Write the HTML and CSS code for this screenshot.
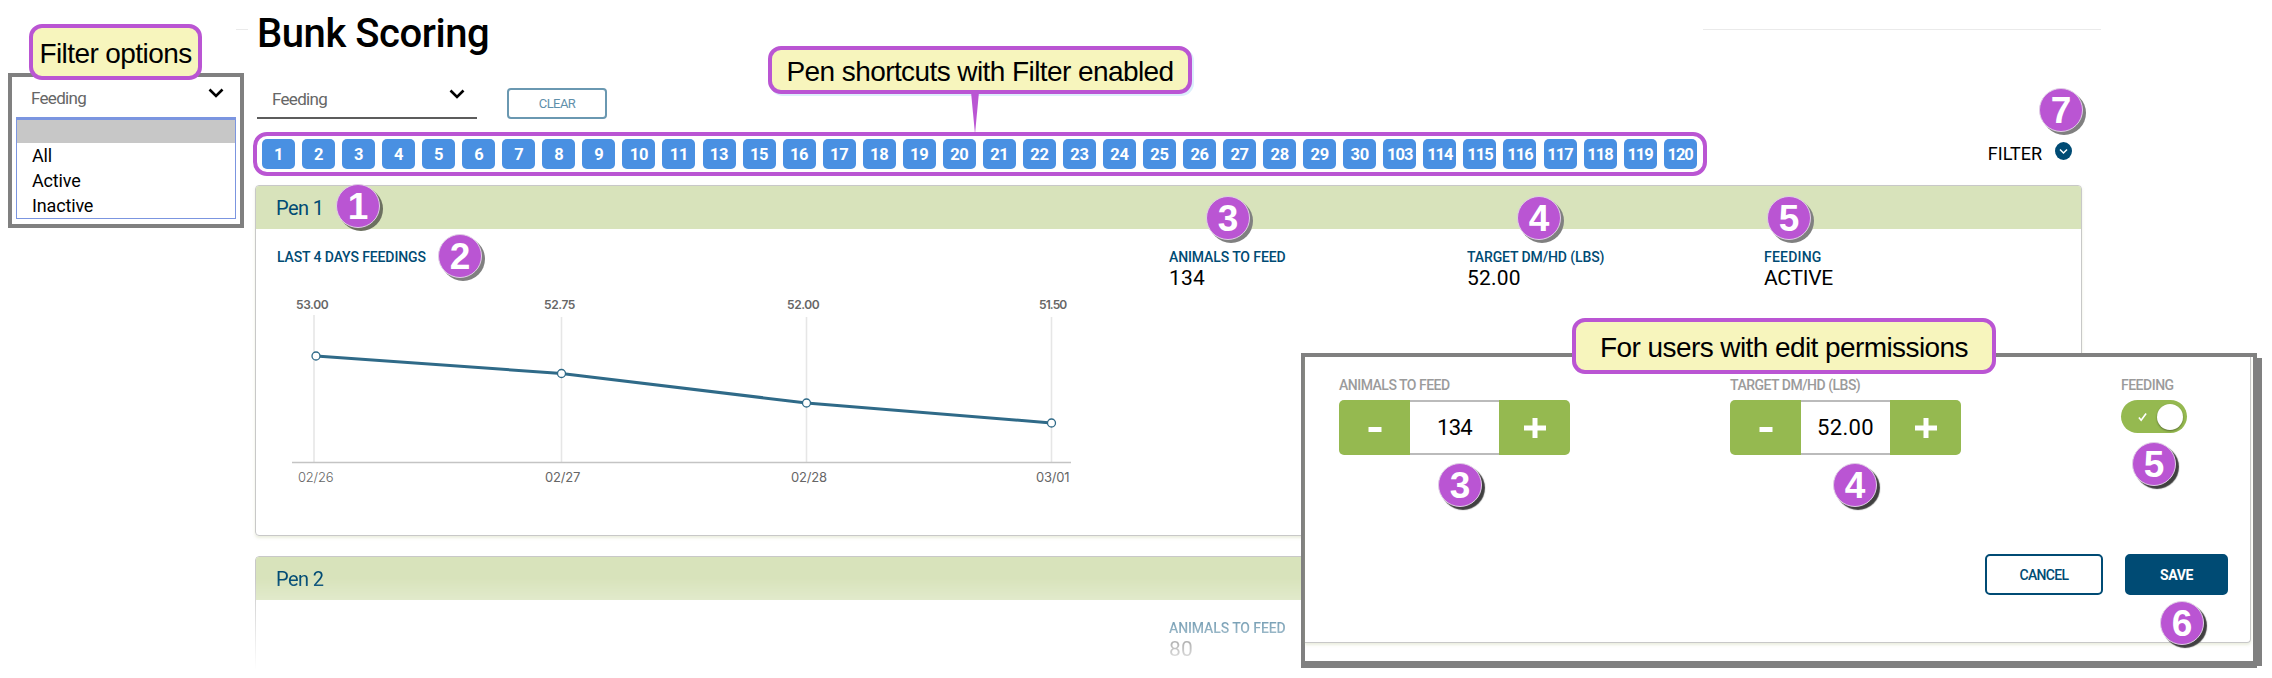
FILE: index.html
```html
<!DOCTYPE html>
<html lang="en">
<head>
    <meta charset="UTF-8">
    <meta name="viewport" content="width=device-width, initial-scale=1.0">
    <title>Bunk Scoring</title>
    <link rel="stylesheet" href="styles.css">
</head>
<body>
    <div class="page">
        <!-- Filter options, opened -->
        <aside class="options-panel">
            <div class="select-head">
                <span>Feeding</span>
                <svg class="chevron" viewBox="0 0 16 10"><path d="M1.5 1.5 8 8l6.500-6.500"/></svg>
            </div>
            <ul class="option-list">
                <li class="option blank"></li>
                <li class="option">All</li>
                <li class="option">Active</li>
                <li class="option">Inactive</li>
            </ul>
        </aside>

        <main class="main">
            <h1>Bunk Scoring</h1>

            <div class="filters">
                <div class="select">
                    <span>Feeding</span>
                    <svg class="chevron" viewBox="0 0 16 10"><path d="M1.5 1.5 8 8l6.500-6.500"/></svg>
                </div>
                <button class="btn-clear">CLEAR</button>
            </div>

            <div class="shortcuts">
                <div class="pens">
                    <span class="pen">1</span>
                    <span class="pen">2</span>
                    <span class="pen">3</span>
                    <span class="pen">4</span>
                    <span class="pen">5</span>
                    <span class="pen">6</span>
                    <span class="pen">7</span>
                    <span class="pen">8</span>
                    <span class="pen">9</span>
                    <span class="pen">10</span>
                    <span class="pen">11</span>
                    <span class="pen">13</span>
                    <span class="pen">15</span>
                    <span class="pen">16</span>
                    <span class="pen">17</span>
                    <span class="pen">18</span>
                    <span class="pen">19</span>
                    <span class="pen">20</span>
                    <span class="pen">21</span>
                    <span class="pen">22</span>
                    <span class="pen">23</span>
                    <span class="pen">24</span>
                    <span class="pen">25</span>
                    <span class="pen">26</span>
                    <span class="pen">27</span>
                    <span class="pen">28</span>
                    <span class="pen">29</span>
                    <span class="pen">30</span>
                    <span class="pen long">103</span>
                    <span class="pen long">114</span>
                    <span class="pen long">115</span>
                    <span class="pen long">116</span>
                    <span class="pen long">117</span>
                    <span class="pen long">118</span>
                    <span class="pen long">119</span>
                    <span class="pen long">120</span>
                </div>
                <div class="filter-toggle">
                    <span>FILTER</span>
                    <svg class="filter-icon" viewBox="0 0 17 18">
                        <ellipse cx="8.5" cy="9" rx="8.500" ry="9"/>
                        <path d="M5 7.500 8.500 11 12 7.500"/>
                    </svg>
                </div>
            </div>

            <section class="card">
                <h2>Pen 1</h2>
                <div class="card-body">
                    <div>
                        <div class="label">LAST 4 DAYS FEEDINGS</div>
                        <svg class="chart" width="820" height="230" viewBox="0 0 820 230">
                            <g class="grid">
                                <path d="M37 48v147M284.500 50v145M529.500 50v145M774.500 50v145"/>
                            </g>
                            <path class="axis" d="M15 195.500h779"/>
                            <polyline class="line" points="39,89 284.500,106.500 529.500,136 774.500,156"/>
                            <g class="dots">
                                <circle cx="39" cy="89" r="4"/>
                                <circle cx="284.500" cy="106.500" r="4"/>
                                <circle cx="529.500" cy="136" r="4"/>
                                <circle cx="774.500" cy="156" r="4"/>
                            </g>
                            <g class="values">
                                <text x="19" y="42">53.00</text>
                                <text x="267" y="42">52.75</text>
                                <text x="510" y="42">52.00</text>
                                <text class="tight" x="762" y="42">51.50</text>
                            </g>
                            <g class="dates">
                                <text class="thin" x="21" y="215">02/26</text>
                                <text x="268" y="215">02/27</text>
                                <text x="514" y="215">02/28</text>
                                <text x="759" y="215">03/01</text>
                            </g>
                        </svg>
                    </div>
                    <div>
                        <div class="label">ANIMALS TO FEED</div>
                        <div class="value">134</div>
                    </div>
                    <div>
                        <div class="label">TARGET DM/HD (LBS)</div>
                        <div class="value">52.00</div>
                    </div>
                    <div>
                        <div class="label wide">FEEDING</div>
                        <div class="value caps">ACTIVE</div>
                    </div>
                </div>
            </section>

            <section class="card fading">
                <h2>Pen 2</h2>
                <div class="card-body">
                    <div></div>
                    <div>
                        <div class="label">ANIMALS TO FEED</div>
                        <div class="value">80</div>
                    </div>
                </div>
            </section>
        </main>

        <!-- Rules left and right of the title -->
        <div class="rule rule-left"></div>
        <div class="rule rule-right"></div>

        <!-- Edit view -->
        <div class="edit-panel">
            <div class="edit-card">
                <div class="edit-fields">
                    <div>
                        <div class="edit-label">ANIMALS TO FEED</div>
                        <div class="stepper">
                            <button class="step"><svg viewBox="0 0 22 22"><path d="M4.500 12.500h13"/></svg></button>
                            <span class="step-value tight">134</span>
                            <button class="step"><svg viewBox="0 0 22 22"><path d="M0 11h22M11 1v20"/></svg></button>
                        </div>
                    </div>
                    <div>
                        <div class="edit-label">TARGET DM/HD (LBS)</div>
                        <div class="stepper">
                            <button class="step"><svg viewBox="0 0 22 22"><path d="M4.500 12.500h13"/></svg></button>
                            <span class="step-value">52.00</span>
                            <button class="step"><svg viewBox="0 0 22 22"><path d="M0 11h22M11 1v20"/></svg></button>
                        </div>
                    </div>
                    <div>
                        <div class="edit-label">FEEDING</div>
                        <div class="toggle">
                            <svg viewBox="0 0 10 10"><path d="M1 5.500 3.500 8.500 9 1"/></svg>
                            <span class="knob"></span>
                        </div>
                    </div>
                </div>
                <div class="actions">
                    <button class="btn-cancel">CANCEL</button>
                    <button class="btn-save">SAVE</button>
                </div>
            </div>
        </div>

        <!-- Callouts -->
        <div class="callout callout-filter">Filter options</div>
        <div class="callout callout-pens">Pen shortcuts with Filter enabled
            <svg class="pointer" viewBox="0 0 9 42" preserveAspectRatio="none"><path d="M0 0h9L4.500 42z"/></svg>
        </div>
        <div class="callout callout-edit">For users with edit permissions</div>

        <!-- Numbered markers -->
        <span class="badge b1">1</span>
        <span class="badge b2">2</span>
        <span class="badge b3">3</span>
        <span class="badge b4">4</span>
        <span class="badge b5">5</span>
        <span class="badge b7">7</span>
        <span class="badge dark e3">3</span>
        <span class="badge dark e4">4</span>
        <span class="badge dark e5">5</span>
        <span class="badge dark e6">6</span>
    </div>
</body>
</html>
```
FILE: styles.css
```css
* {
    box-sizing: border-box;
    margin: 0;
    padding: 0;
}

body {
    background: #fff;
    font-family: Roboto, Arial, sans-serif;
    color: #000;
}

button {
    font-family: inherit;
    border: none;
}

.page {
    position: relative;
    display: flex;
    width: 2272px;
    height: 678px;
    overflow: hidden;
    padding-left: 8px;
}

/* Opened filter dropdown */
.options-panel {
    width: 236px;
    height: 155px;
    margin: 73px 11px 0 0;
    padding: 0 4px;
    border: 4px solid #808080;
    flex: none;
}

.select-head,
.select {
    display: flex;
    justify-content: space-between;
    align-items: center;
    height: 40px;
    padding: 1px 12px 0 15px;
    font-size: 17px;
    letter-spacing: -0.7px;
    color: #666;
}

.chevron {
    width: 16px;
    height: 10px;
    margin-bottom: 10px;
    fill: none;
    stroke: #000;
    stroke-width: 2.6;
}

.option-list {
    list-style: none;
    height: 102px;
    border: 1px solid #7b95e0;
    border-top-width: 3px;
}

.option {
    height: 25px;
    padding-left: 15px;
    font-size: 18px;
    line-height: 26px;
    letter-spacing: -0.15px;
}

.option.blank {
    height: 23px;
    background: #c7c7c7;
}

/* Main column */
.main {
    width: 1827px;
    padding-top: 10px;
    flex: none;
}

h1 {
    height: 47px;
    padding-left: 2px;
    font-size: 40px;
    font-weight: 500;
    line-height: 47px;
    letter-spacing: -0.45px;
}

.filters {
    display: flex;
    align-items: flex-end;
    gap: 30px;
    margin-top: 22px;
    padding-left: 2px;
}

.select {
    width: 220px;
    border-bottom: 2px solid #5c5c5c;
}

.btn-clear {
    width: 100px;
    height: 31px;
    border: 2px solid #6a98b1;
    border-radius: 4px;
    background: #fff;
    color: #5f90ab;
    font-size: 13px;
    letter-spacing: -0.6px;
}

.shortcuts {
    display: flex;
    justify-content: space-between;
    align-items: center;
    margin: 13px 0 9px -2px;
}

.pens {
    display: flex;
    justify-content: space-between;
    align-items: center;
    width: 1454px;
    height: 44px;
    padding: 0 6px 0 5px;
    border: 4px solid #ba55d3;
    border-radius: 14px;
}

.pen {
    width: 33px;
    height: 30px;
    border-radius: 5px;
    background: #4990e2;
    color: #fff;
    font-size: 16.5px;
    font-weight: 700;
    line-height: 31px;
    text-align: center;
    letter-spacing: -0.3px;
}

.pen.long {
    letter-spacing: -1px;
}

.filter-toggle {
    display: flex;
    align-items: center;
    gap: 13px;
    margin: 0 10px 2px 0;
    font-size: 18px;
}

.filter-icon {
    width: 17px;
    height: 18px;
    margin-bottom: 5px;
    fill: #004b74;
}

.filter-icon path {
    fill: none;
    stroke: #fff;
    stroke-width: 1.5;
}

/* Pen cards */
.card {
    height: 351px;
    margin-bottom: 20px;
    border: 1px solid #c8c8c8;
    border-radius: 4px;
    box-shadow: 0 2px 3px rgba(190, 200, 150, 0.3);
    overflow: hidden;
}

.card h2 {
    height: 43px;
    padding: 1px 0 0 20px;
    background: #d8e3bb;
    color: #004b74;
    font-size: 20px;
    font-weight: 400;
    line-height: 43px;
    letter-spacing: -0.6px;
}

.card-body {
    display: grid;
    grid-template-columns: 892px 298px 297px 1fr;
    padding: 18px 0 0 21px;
}

.label {
    height: 20px;
    color: #004b74;
    font-size: 14px;
    font-weight: 500;
    line-height: 20px;
    letter-spacing: -0.11px;
}

.label.wide {
    letter-spacing: 0.2px;
}

.value {
    font-size: 21px;
    line-height: 22px;
    letter-spacing: 0.2px;
}

.value.caps {
    letter-spacing: -0.25px;
}

.fading {
    mask-image: linear-gradient(#000 22px, transparent 114px);
}

/* Feedings chart */
.chart {
    display: block;
    font-family: Inter, sans-serif;
}

.grid path {
    stroke: #e6e6e6;
    stroke-width: 1.6;
}

.axis {
    stroke: #c4c4c4;
    stroke-width: 1.5;
}

.line {
    fill: none;
    stroke: #2f6a88;
    stroke-width: 3;
}

.dots circle {
    fill: #fff;
    stroke: #2f6a88;
    stroke-width: 1.3;
}

.values text {
    fill: #666;
    font-size: 12px;
    font-weight: 600;
    letter-spacing: -0.4px;
}

.values .tight {
    letter-spacing: -0.9px;
}

.dates text {
    fill: #666;
    font-size: 13px;
    letter-spacing: -0.2px;
}

.dates .thin {
    font-weight: 300;
}

.rule {
    position: absolute;
    top: 29px;
    height: 1px;
    background: #eaeaea;
}

.rule-left {
    left: 236px;
    width: 12px;
}

.rule-right {
    left: 1703px;
    width: 398px;
}

/* Edit view */
.edit-panel {
    position: absolute;
    left: 1301px;
    top: 353px;
    width: 956px;
    height: 315px;
    padding-right: 2px;
    border: 4px solid #808080;
    border-bottom-width: 7px;
    background: #fff;
}

.edit-panel::after {
    content: "";
    position: absolute;
    top: 1px;
    right: -9px;
    width: 5px;
    height: 308px;
    background: #808080;
}

.edit-card {
    height: 286px;
    padding-top: 18px;
    border: 1px solid #c8c8c8;
    border-width: 0 1px 1px 0;
    border-bottom-right-radius: 4px;
    box-shadow: 0 2px 3px rgba(190, 200, 150, 0.3);
}

.edit-fields {
    display: grid;
    grid-template-columns: 391px 391px 1fr;
    padding-left: 34px;
}

.edit-label {
    height: 25px;
    color: #9b9b9b;
    font-size: 14px;
    font-weight: 500;
    line-height: 21px;
    letter-spacing: -0.5px;
}

.stepper {
    display: flex;
    width: 231px;
    height: 55px;
    border-radius: 5px;
    overflow: hidden;
}

.step {
    display: flex;
    justify-content: center;
    align-items: center;
    width: 71px;
    background: #95b950;
}

.step svg {
    width: 22px;
    height: 22px;
    stroke: #fff;
    stroke-width: 5;
}

.step-value {
    flex: 1;
    border: 2px solid #bbb;
    border-width: 2px 0;
    font-size: 22px;
    line-height: 51px;
    text-align: center;
    letter-spacing: 0.3px;
}

.step-value.tight {
    letter-spacing: -0.7px;
}

.toggle {
    display: flex;
    justify-content: space-between;
    align-items: center;
    width: 66px;
    height: 33px;
    padding: 0 4px 0 17px;
    border-radius: 17px;
    background: #95b950;
}

.toggle svg {
    width: 9px;
    height: 10px;
    fill: none;
    stroke: #fff;
    stroke-width: 1.8;
}

.knob {
    width: 26px;
    height: 26px;
    border-radius: 50%;
    background: #fff;
    box-shadow: 0 1px 2px rgba(0, 0, 0, 0.4);
}

.actions {
    display: flex;
    justify-content: flex-end;
    gap: 22px;
    margin-top: 99px;
    padding-right: 22px;
}

.btn-cancel,
.btn-save {
    height: 41px;
    border: 2px solid #004b74;
    border-radius: 5px;
    font-size: 14px;
}

.btn-cancel {
    width: 118px;
    background: #fff;
    color: #004b74;
    font-weight: 500;
    letter-spacing: -0.65px;
}

.btn-save {
    width: 103px;
    background: #004b74;
    color: #fff;
    font-weight: 700;
    letter-spacing: -0.4px;
}

/* Callouts */
.callout {
    position: absolute;
    border: 4px solid #ba55d3;
    border-radius: 13px;
    background: #f7f5bd;
    font-family: "Liberation Sans", Arial, sans-serif;
    font-size: 28px;
    text-align: center;
    letter-spacing: -0.58px;
    white-space: nowrap;
}

.callout-filter {
    left: 29px;
    top: 24px;
    width: 173px;
    height: 56px;
    line-height: 52px;
}

.callout-pens {
    left: 768px;
    top: 46px;
    width: 424px;
    height: 48px;
    line-height: 43px;
    box-shadow: 2px 2px 0 #dceefb;
}

.callout-edit {
    left: 1572px;
    top: 318px;
    width: 424px;
    height: 56px;
    line-height: 51px;
}

.pointer {
    position: absolute;
    left: 199px;
    top: 42px;
    width: 8px;
    height: 42px;
    fill: #ba55d3;
}

/* Numbered markers */
.badge {
    position: absolute;
    width: 44px;
    height: 44px;
    border: 1px solid #e0cde6;
    border-radius: 50%;
    background: #ba55d3;
    box-shadow: 3px 3px 0 #808080;
    color: #fff;
    font-family: "Liberation Sans", Arial, sans-serif;
    font-size: 37px;
    font-weight: 700;
    line-height: 43px;
    text-align: center;
}

.b1 {
    left: 336px;
    top: 184px;
    box-shadow: 3px 3px 0 #6c7060;
}

.b2 {
    left: 438px;
    top: 234px;
}

.b3 {
    left: 1206px;
    top: 196px;
}

.b4 {
    left: 1517px;
    top: 196px;
}

.b5 {
    left: 1767px;
    top: 196px;
}

.b7 {
    left: 2039px;
    top: 88px;
}

.dark {
    box-shadow: 3px 3px 1px #404040;
}

.e3 {
    left: 1438px;
    top: 463px;
}

.e4 {
    left: 1833px;
    top: 463px;
}

.e5 {
    left: 2132px;
    top: 442px;
}

.e6 {
    left: 2160px;
    top: 601px;
}
```
